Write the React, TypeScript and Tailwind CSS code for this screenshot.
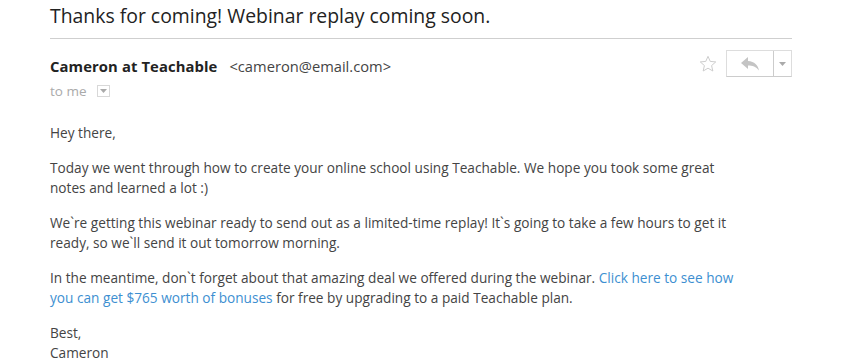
import React from "react";

export default function App() {
  return (
    <div className="w-[841px] h-[364px] bg-white overflow-hidden" style={{ fontFamily: '"Open Sans", "Liberation Sans", sans-serif' }}>
      <div className="ml-[50px] w-[742px]">
        <h1 className="pt-[3px] h-[39px] text-[19.4px] leading-[26px] text-[#222] border-b border-[#cfcfcf]">
          Thanks for coming! Webinar replay coming soon.
        </h1>
        <div className="flex items-start justify-between mt-[11px]">
          <div className="flex flex-col">
            <div className="flex items-baseline h-[26px] pt-[5px]">
              <span className="text-[14.8px] font-bold text-[#222] tracking-[0.1px]">Cameron at Teachable</span>
              <span className="ml-[12px] text-[14.7px] text-[#444]">&lt;cameron@email.com&gt;</span>
            </div>
            <div className="flex items-center mt-[8px] h-[14px]">
              <span className="text-[13.5px] text-[#aaa]">to me</span>
              <span className="ml-[10px] w-[13px] h-[12px] border border-[#d8d8d8] flex items-center justify-center">
                <svg width="7" height="4" viewBox="0 0 7 4"><path d="M0 0H7L3.5 4Z" fill="#aaa" /></svg>
              </span>
            </div>
          </div>
          <div className="flex items-center">
            <svg width="20" height="20" viewBox="0 0 24 24" className="mr-[8px] mt-[1px]">
              <path d="M12 2.8l2.7 6.1 6.6.6-5 4.4 1.5 6.5L12 17l-5.8 3.4 1.5-6.5-5-4.4 6.6-.6z" fill="none" stroke="#c8c8c8" strokeWidth="1.1" strokeLinejoin="round" />
            </svg>
            <div className="flex h-[27px] border border-[#ddd] border-b-[#ccc]">
              <div className="w-[46px] flex items-center justify-center">
                <svg width="20" height="14" viewBox="0 0 20 14">
                  <path d="M8 0L1 6l7 6V8.5c4.5 0 8 1 11 5C18 8 14.5 4.5 8 4Z" fill="#c4c4c4" />
                </svg>
              </div>
              <div className="w-px bg-[#ccc]" />
              <div className="w-[17px] flex items-center justify-center">
                <svg width="7" height="4" viewBox="0 0 7 4"><path d="M0 0H7L3.5 4Z" fill="#aaa" /></svg>
              </div>
            </div>
          </div>
        </div>
        <div className="mt-[25px] text-[13.65px] leading-[20px] text-[#444]">
          <p className="mb-[15px]">Hey there,</p>
          <p className="mb-[15px]">
            Today we went through how to create your online school using Teachable. We hope you took some great
            <br />
            notes and learned a lot :)
          </p>
          <p className="mb-[15px]">
            We`re getting this webinar ready to send out as a limited-time replay! It`s going to take a few hours to get it
            <br />
            ready, so we`ll send it out tomorrow morning.
          </p>
          <p className="mb-[15px]">
            In the meantime, don`t forget about that amazing deal we offered during the webinar.{" "}
            <span className="text-[#3d8fd1]">Click here to see how</span>
            <br />
            <span className="text-[#3d8fd1]">you can get $765 worth of bonuses</span> for free by upgrading to a paid Teachable plan.
          </p>
          <p>
            Best,
            <br />
            Cameron
          </p>
        </div>
      </div>
    </div>
  );
}
